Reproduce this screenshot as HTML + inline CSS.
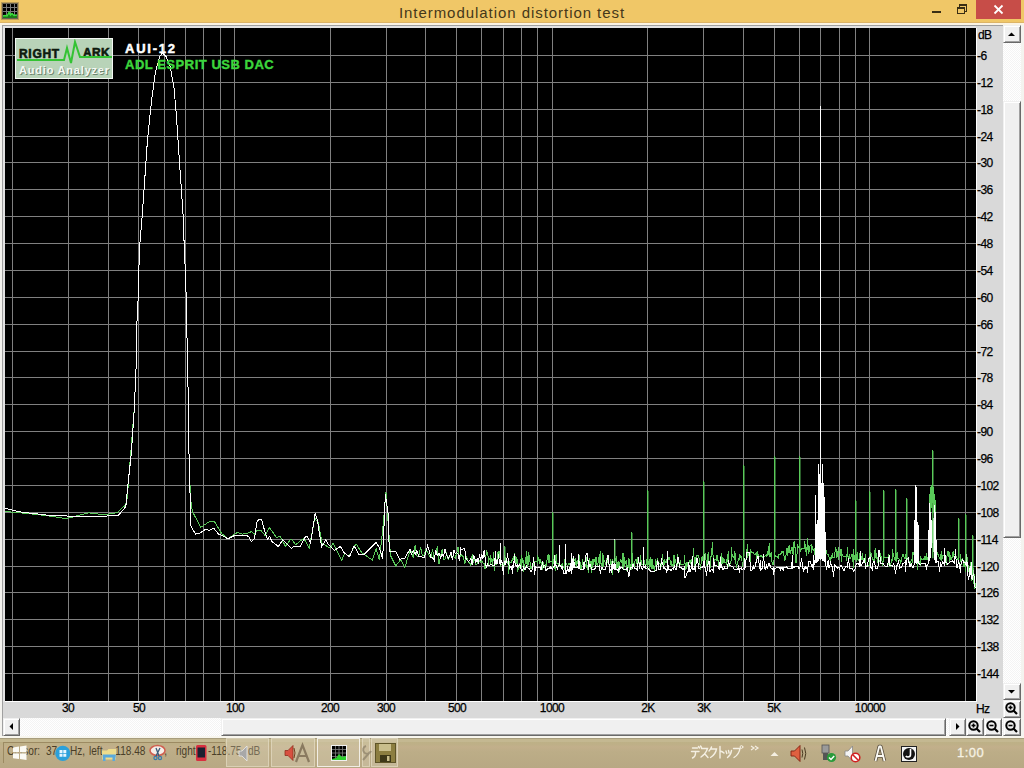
<!DOCTYPE html>
<html><head><meta charset="utf-8"><title>Intermodulation distortion test</title>
<style>
*{box-sizing:border-box}
html,body{margin:0;padding:0}
body{width:1024px;height:768px;overflow:hidden;position:relative;background:#FBF4E4;font-family:"Liberation Sans",sans-serif}
.a{position:absolute}
.lbl{position:absolute;font-size:12px;color:#000;line-height:12px;white-space:nowrap;letter-spacing:-0.6px;-webkit-text-stroke:0.25px #000}
.btn{position:absolute;background:#F0F0F0;border-top:1px solid #F0F0F0;border-left:1px solid #F0F0F0;border-right:1px solid #696969;border-bottom:1px solid #696969;box-shadow:inset 1px 1px 0 #fff, inset -1px -1px 0 #A0A0A0}
.track{position:absolute;background-color:#F4F4F4;background-image:linear-gradient(45deg,#fff 25%,transparent 25%,transparent 75%,#fff 75%),linear-gradient(45deg,#fff 25%,transparent 25%,transparent 75%,#fff 75%);background-size:2px 2px;background-position:0 0,1px 1px}
</style></head><body>

<div class="a" style="left:0;top:0;width:1024px;height:22px;background:#F0C767"></div>
<div class="a" style="left:0;top:22px;width:1024px;height:1px;background:#DDB466"></div>
<div class="a" style="left:2px;top:3px;width:16px;height:16px;background:#000;border:1px solid #6a6250;box-shadow:0 0 0 1px rgba(90,80,60,0.35)">
<svg width="14" height="14" style="position:absolute;left:0;top:0">
<g stroke="#7a7a7a" stroke-width="1">
<line x1="3.5" y1="0" x2="3.5" y2="14"/><line x1="7.5" y1="0" x2="7.5" y2="14"/><line x1="11.5" y1="0" x2="11.5" y2="14"/>
<line x1="0" y1="3.5" x2="14" y2="3.5"/><line x1="0" y1="7.5" x2="14" y2="7.5"/><line x1="0" y1="11.5" x2="14" y2="11.5"/>
</g>
<path d="M0 14V12L2 11.5L4 12L6 8.5L7.5 11L9 9.5L11 11.5L14 11V14Z" fill="#1a7a1a"/><polyline points="0,12 2,11.5 4,12 6,8.5 7.5,11 9,9.5 11,11.5 14,11" fill="none" stroke="#3ae03a" stroke-width="1.5"/>
</svg></div>
<div class="a" style="left:0;top:4px;width:1024px;text-align:center;font-size:15px;line-height:18px;color:#45381A;letter-spacing:0.95px;padding-left:0px">Intermodulation distortion test</div>
<div class="a" style="left:932px;top:11px;width:9px;height:2px;background:#3A2E14"></div>
<div class="a" style="left:959px;top:4px;width:8px;height:8px;border:1px solid #3A2E14;border-top-width:2px"></div>
<div class="a" style="left:957px;top:7px;width:8px;height:7px;border:1px solid #3A2E14;border-top-width:2px;background:#F0C767"></div>
<div class="a" style="left:976px;top:0;width:45px;height:19px;background:#C74D48"></div>
<svg class="a" style="left:976px;top:0" width="45" height="19"><g stroke="#fff" stroke-width="1.8"><line x1="18.5" y1="5.5" x2="26.5" y2="13.5"/><line x1="26.5" y1="5.5" x2="18.5" y2="13.5"/></g></svg>
<div class="a" style="left:2px;top:25px;width:1019px;height:713px;background:#D9D9D9;border-top:1px solid #A0A0A0;border-left:1px solid #A0A0A0"></div>
<div class="a" style="left:3px;top:26px;width:973px;height:2px;background:#E3E3E3"></div>
<div class="a" style="left:3px;top:26px;width:2px;height:676px;background:#E3E3E3"></div>
<div class="a" style="left:5px;top:28px;width:972px;height:674px;background:#000;border-right:1px solid #fff;border-bottom:1px solid #fff"></div>
<svg class="a" style="left:0;top:0" width="1024" height="768">
<path d="M12.5 28V701 M68.5 28V701 M108.5 28V701 M138.5 28V701 M164.5 28V701 M185.5 28V701 M203.5 28V701 M220.5 28V701 M234.5 28V701 M330.5 28V701 M386.5 28V701 M425.5 28V701 M456.5 28V701 M481.5 28V701 M503.5 28V701 M521.5 28V701 M537.5 28V701 M552.5 28V701 M647.5 28V701 M703.5 28V701 M743.5 28V701 M774.5 28V701 M799.5 28V701 M820.5 28V701 M839.5 28V701 M855.5 28V701 M869.5 28V701 M965.5 28V701 M5 55.5H976 M5 82.5H976 M5 109.5H976 M5 136.5H976 M5 162.5H976 M5 189.5H976 M5 216.5H976 M5 243.5H976 M5 270.5H976 M5 297.5H976 M5 324.5H976 M5 351.5H976 M5 377.5H976 M5 404.5H976 M5 431.5H976 M5 458.5H976 M5 485.5H976 M5 512.5H976 M5 539.5H976 M5 566.5H976 M5 592.5H976 M5 619.5H976 M5 646.5H976 M5 673.5H976" stroke="#808080" stroke-width="1" fill="none" shape-rendering="crispEdges"/>
</svg>
<svg class="a" style="left:0;top:0" width="1024" height="768"><clipPath id="pc"><rect x="5" y="28" width="971" height="673"/></clipPath><g clip-path="url(#pc)" fill="none" stroke-width="1" shape-rendering="crispEdges"><path d="M5.0 511.4L27.3 513.5L47.9 515.8L65.6 518.5L72.5 517.0L88.9 512.8L104.0 514.9L117.6 512.5L125.8 504.6L127.2 497.8L134.4 407.0L136.4 360.0L136.6 342.5L137.1 317.0L138.4 294.0L138.9 268.9L139.7 246.0L142.2 215.5L143.8 193.0L147.3 142.3L149.8 116.9L152.4 94.0L155.4 72.4L159.5 57.0L162.5 53.0L166.3 57.0L170.1 66.0L174.0 87.7L176.5 116.9L179.0 155.0L181.6 193.0L182.3 202.9L183.3 218.0L184.1 243.5L184.9 261.0L186.1 294.0L187.1 342.5L187.4 360.0L188.1 391.0L189.0 453.8L189.9 481.5L190.4 498.0L192.5 511.7L200.8 527.3L210.2 521.0L214.4 521.6L221.7 533.5L227.9 538.8L237.3 532.5L242.5 534.1L250.0 532.5L251.4 531.4L254.6 534.2L256.9 530.1L261.0 530.5L265.1 535.5L269.2 527.3L276.5 537.4L280.1 536.5L285.6 546.5L291.0 538.7L295.6 544.7L303.8 538.3L309.3 547.9L314.7 518.2L318.4 522.8L322.0 542.8L325.7 545.6L330.0 547.9L333.2 543.2L341.7 560.1L345.0 553.0L348.8 556.8L356.0 543.8L361.9 552.9L372.3 560.1L376.2 549.0L379.4 560.1L382.7 529.5L386.0 492.4L390.5 555.5L395.7 565.9L400.9 559.4L404.8 567.9L410.0 550.3L411.3 551.4L413.2 557.5L415.1 545.0L416.9 555.9L418.8 556.6L420.6 546.7L422.3 555.8L424.1 555.2L425.8 550.2L427.6 552.0L429.2 555.5L430.9 557.3L432.6 549.6L434.2 559.1L435.8 550.9L437.4 547.6L439.0 563.8L440.5 556.4L442.1 549.4L443.6 559.8L445.1 558.8L446.6 553.6L448.1 559.4L449.5 556.8L451.0 553.8L452.4 556.4L453.8 556.7L455.2 558.5L456.6 553.4L458.0 547.3L459.4 559.1L460.7 554.1L462.0 555.5L463.4 556.9L464.7 564.4L466.0 556.6L467.2 559.0L468.5 562.0L469.8 563.2L471.0 565.4L472.3 553.8L473.5 561.8L474.7 559.4L475.9 564.5L477.1 563.8L478.3 558.6L479.5 560.8L480.6 562.1L481.8 560.2L482.9 562.8L484.1 563.6L485.2 569.4L486.3 550.4L487.5 552.7L488.5 559.9L488.5 564.7L488.5 559.4L489.5 559.6L490.5 557.2L490.5 555.0L490.5 563.7L491.5 558.1L492.5 566.6L493.5 551.8L494.5 570.8L495.5 559.5L496.5 565.2L497.5 552.4L497.5 560.3L497.5 561.7L498.5 551.8L499.5 551.9L500.5 563.0L500.5 566.5L500.5 564.7L501.5 564.8L502.5 562.9L503.5 563.7L504.5 565.6L504.5 546.0L504.5 565.2L505.5 556.6L505.5 563.7L505.5 561.0L506.5 561.1L507.5 561.1L508.5 567.7L508.5 559.0L508.5 574.4L509.5 566.7L509.5 564.2L509.5 562.0L510.5 562.1L511.5 562.1L512.5 559.0L513.5 559.7L514.5 552.8L515.5 559.9L515.5 564.4L515.5 565.2L516.5 557.4L517.5 569.4L517.5 559.2L517.5 572.4L518.5 567.6L519.5 567.6L520.5 558.7L520.5 567.5L520.5 565.7L521.5 554.8L521.5 562.6L521.5 567.7L522.5 557.7L522.5 559.0L522.5 562.1L523.5 562.9L523.5 559.9L523.5 571.6L524.5 565.5L525.5 562.8L526.5 551.2L526.5 557.0L526.5 560.4L527.5 567.7L527.5 556.4L527.5 563.7L528.5 564.8L528.5 565.3L528.5 552.2L529.5 557.0L530.5 566.3L530.5 563.9L530.5 568.0L531.5 568.0L532.5 564.0L533.5 565.3L534.5 561.6L535.5 561.7L536.5 561.7L537.5 560.0L537.5 563.6L537.5 554.9L538.5 558.8L539.5 563.9L539.5 559.3L539.5 561.5L540.5 561.6L540.5 562.8L540.5 559.3L541.5 564.0L542.5 570.1L542.5 562.9L542.5 564.2L543.5 562.1L543.5 567.3L543.5 562.4L544.5 567.7L545.5 568.0L546.5 561.0L546.5 566.1L546.5 565.7L547.5 555.3L548.5 561.0L548.5 563.0L548.5 554.6L549.5 555.8L549.5 563.2L549.5 561.1L550.5 561.1L551.5 561.1L552.5 562.6L552.5 512.0L552.5 567.1L553.5 558.7L553.5 563.9L553.5 563.7L554.5 564.0L554.5 561.2L554.5 566.2L555.5 571.3L555.5 555.1L555.5 565.6L556.5 561.3L556.5 554.2L556.5 563.2L557.5 563.2L558.5 563.3L559.5 566.6L559.5 564.1L559.5 563.3L560.5 565.9L561.5 565.2L562.5 563.2L562.5 563.5L562.5 567.9L563.5 567.9L564.5 567.9L564.5 558.5L564.5 570.4L565.5 563.3L566.5 564.1L567.5 566.0L568.5 563.9L568.5 563.4L568.5 563.4L569.5 563.4L570.5 566.8L571.5 563.3L571.5 559.6L571.5 558.8L572.5 558.8L573.5 560.0L574.5 560.4L575.5 558.8L575.5 560.6L575.5 564.4L576.5 564.3L576.5 561.0L576.5 567.9L577.5 561.3L578.5 563.7L578.5 565.7L578.5 555.2L579.5 555.2L580.5 567.6L580.5 565.4L580.5 568.5L581.5 568.5L582.5 561.6L582.5 558.9L582.5 565.1L583.5 562.8L583.5 563.2L583.5 565.6L584.5 562.6L585.5 565.1L586.5 566.2L586.5 557.4L586.5 564.7L587.5 570.2L587.5 565.0L587.5 568.5L588.5 562.1L588.5 565.4L588.5 572.6L589.5 562.4L589.5 563.9L589.5 558.2L590.5 564.5L590.5 563.9L590.5 564.8L591.5 572.6L591.5 565.5L591.5 563.3L592.5 559.2L592.5 567.4L592.5 568.1L593.5 561.6L593.5 558.9L593.5 561.3L594.5 561.3L595.5 556.9L595.5 566.9L595.5 562.3L596.5 557.2L596.5 562.7L596.5 562.0L597.5 567.0L598.5 558.5L599.5 555.7L599.5 567.4L599.5 553.7L600.5 557.1L600.5 551.4L600.5 563.1L601.5 563.1L602.5 567.7L602.5 553.3L602.5 569.8L603.5 564.8L603.5 555.0L603.5 560.8L604.5 560.8L605.5 563.8L606.5 566.3L606.5 563.6L606.5 559.9L607.5 556.2L607.5 557.8L607.5 562.6L608.5 563.3L609.5 566.6L610.5 562.9L610.5 559.3L610.5 563.7L611.5 561.4L612.5 574.5L612.5 558.9L612.5 562.5L613.5 562.4L614.5 560.5L614.5 539.0L614.5 560.5L615.5 560.5L616.5 555.7L616.5 559.8L616.5 570.1L617.5 565.1L617.5 566.8L617.5 563.7L618.5 561.0L618.5 562.4L618.5 567.5L619.5 572.4L619.5 564.7L619.5 562.8L620.5 560.5L621.5 562.3L621.5 562.6L621.5 561.0L622.5 561.8L622.5 552.5L622.5 567.6L623.5 569.9L623.5 559.4L623.5 553.4L624.5 560.8L624.5 566.0L624.5 561.5L625.5 563.7L625.5 563.7L625.5 562.1L626.5 560.8L626.5 561.6L626.5 571.2L627.5 568.4L627.5 565.3L627.5 565.4L628.5 567.8L628.5 560.6L628.5 558.3L629.5 572.6L629.5 558.8L629.5 566.8L630.5 566.8L631.5 561.4L631.5 532.0L631.5 570.2L632.5 567.3L632.5 553.1L632.5 565.5L633.5 563.2L633.5 564.4L633.5 564.2L634.5 564.6L634.5 567.3L634.5 562.4L635.5 559.9L636.5 559.9L637.5 567.3L637.5 557.2L637.5 563.6L638.5 563.6L639.5 561.7L639.5 565.5L639.5 564.6L640.5 563.0L640.5 561.3L640.5 555.2L641.5 564.1L642.5 564.1L643.5 564.1L644.5 560.4L644.5 563.6L644.5 564.6L645.5 564.6L646.5 564.4L646.5 559.0L646.5 561.9L647.5 566.5L647.5 490.0L647.5 568.7L648.5 560.8L649.5 568.7L649.5 558.6L649.5 565.0L650.5 567.0L650.5 566.3L650.5 557.0L651.5 568.6L651.5 559.3L651.5 559.6L652.5 559.7L652.5 568.8L652.5 562.7L653.5 567.4L654.5 569.5L655.5 563.0L655.5 558.7L655.5 564.2L656.5 564.9L656.5 567.8L656.5 564.2L657.5 558.7L657.5 562.1L657.5 558.5L658.5 563.7L658.5 565.2L658.5 563.9L659.5 563.8L660.5 563.8L661.5 567.3L661.5 563.0L661.5 561.6L662.5 553.8L663.5 567.0L663.5 566.1L663.5 561.5L664.5 558.9L664.5 561.1L664.5 563.7L665.5 561.9L666.5 560.7L666.5 563.1L666.5 560.4L667.5 557.4L667.5 565.4L667.5 562.5L668.5 557.1L669.5 557.1L670.5 562.9L670.5 564.0L670.5 564.6L671.5 560.7L671.5 565.6L671.5 565.6L672.5 564.9L673.5 567.1L673.5 555.0L673.5 569.6L674.5 555.1L674.5 564.8L674.5 559.4L675.5 559.4L676.5 567.1L677.5 564.1L677.5 554.4L677.5 556.4L678.5 563.1L679.5 564.3L680.5 560.5L680.5 561.6L680.5 564.8L681.5 564.8L682.5 564.7L683.5 564.7L684.5 562.6L684.5 561.7L684.5 555.5L685.5 569.6L686.5 568.4L686.5 563.0L686.5 563.5L687.5 561.8L687.5 561.6L687.5 565.8L688.5 565.7L689.5 560.5L690.5 563.8L690.5 560.4L690.5 560.1L691.5 560.0L692.5 564.4L693.5 548.1L694.5 566.2L694.5 567.7L694.5 568.6L695.5 564.2L695.5 557.2L695.5 562.6L696.5 562.3L696.5 563.6L696.5 555.9L697.5 555.9L698.5 555.8L699.5 559.5L700.5 569.8L701.5 558.9L702.5 556.2L702.5 561.3L702.5 558.8L703.5 563.5L703.5 481.0L703.5 566.6L704.5 555.9L704.5 558.3L704.5 564.7L705.5 553.4L706.5 565.8L707.5 566.6L707.5 554.1L707.5 564.3L708.5 551.9L708.5 562.1L708.5 564.9L709.5 562.9L709.5 561.4L709.5 564.8L710.5 566.6L710.5 560.3L710.5 558.8L711.5 554.3L712.5 542.3L713.5 566.3L713.5 563.7L713.5 561.6L714.5 566.7L714.5 562.9L714.5 559.7L715.5 559.6L716.5 560.0L716.5 556.0L716.5 555.7L717.5 555.6L718.5 565.5L718.5 561.9L718.5 560.2L719.5 568.4L720.5 555.9L721.5 562.5L721.5 566.8L721.5 552.7L722.5 561.7L722.5 563.9L722.5 559.6L723.5 558.8L723.5 562.7L723.5 559.9L724.5 559.8L724.5 559.0L724.5 562.2L725.5 562.1L726.5 563.8L727.5 554.1L727.5 558.3L727.5 561.6L728.5 560.9L728.5 550.5L728.5 566.6L729.5 563.9L730.5 563.8L731.5 557.5L731.5 547.4L731.5 552.2L732.5 556.3L733.5 556.2L734.5 559.6L734.5 553.4L734.5 550.6L735.5 556.1L735.5 557.1L735.5 561.0L736.5 567.7L737.5 563.0L738.5 559.4L738.5 557.9L738.5 558.3L739.5 560.3L739.5 556.9L739.5 554.5L740.5 556.4L740.5 555.6L740.5 558.4L741.5 556.1L742.5 566.6L743.5 557.3L743.5 465.0L743.5 554.4L744.5 561.6L745.5 561.3L746.5 557.6L746.5 549.3L746.5 555.6L747.5 556.8L747.5 543.5L747.5 557.6L748.5 554.1L749.5 556.8L749.5 558.1L749.5 555.8L750.5 564.1L750.5 566.5L750.5 549.4L751.5 552.5L752.5 552.4L753.5 552.2L754.5 554.9L755.5 554.8L756.5 552.0L756.5 555.0L756.5 561.6L757.5 551.5L758.5 555.9L759.5 556.8L760.5 555.9L761.5 555.8L762.5 557.1L763.5 557.0L764.5 556.8L765.5 555.7L766.5 556.3L767.5 551.3L767.5 553.6L767.5 555.6L768.5 553.0L768.5 555.4L768.5 548.7L769.5 543.2L769.5 551.9L769.5 556.6L770.5 555.7L770.5 556.8L770.5 553.1L771.5 556.4L771.5 552.2L771.5 558.5L772.5 565.0L773.5 564.8L774.5 554.4L774.5 456.0L774.5 554.4L775.5 556.6L776.5 556.5L777.5 557.0L778.5 558.2L778.5 558.9L778.5 554.2L779.5 554.7L780.5 554.5L781.5 551.6L781.5 553.6L781.5 551.2L782.5 552.1L783.5 552.0L784.5 560.1L785.5 560.0L786.5 550.2L786.5 553.4L786.5 547.6L787.5 552.1L787.5 556.0L787.5 549.0L788.5 546.6L788.5 552.8L788.5 553.0L789.5 548.0L789.5 545.4L789.5 551.8L790.5 553.1L790.5 551.8L790.5 552.1L791.5 548.9L791.5 547.3L791.5 547.1L792.5 554.1L792.5 548.8L792.5 553.3L793.5 541.9L793.5 553.1L793.5 555.1L794.5 541.0L795.5 552.0L795.5 551.2L795.5 562.6L796.5 562.5L797.5 545.4L798.5 547.3L799.5 547.2L799.5 456.0L799.5 547.2L800.5 550.7L801.5 549.0L802.5 548.9L803.5 548.8L804.5 548.4L804.5 546.3L804.5 541.0L805.5 547.7L806.5 555.7L807.5 538.2L807.5 550.0L807.5 544.4L808.5 546.2L808.5 548.4L808.5 552.8L809.5 551.5L809.5 549.9L809.5 546.3L810.5 545.4L811.5 544.5L811.5 552.7L811.5 550.4L812.5 546.4L812.5 547.6L812.5 549.6L813.5 549.9L814.5 550.7L814.5 554.5L814.5 553.9L815.5 541.4L815.5 553.0L815.5 552.6L816.5 548.8L817.5 551.7L818.5 550.0L818.5 544.7L818.5 549.3L819.5 553.3L820.5 552.7L821.5 551.0L822.5 546.4L823.5 546.8L824.5 546.1L825.5 561.7L825.5 554.4L825.5 551.8L826.5 549.7L826.5 551.8L826.5 553.6L827.5 554.7L828.5 555.0L829.5 559.2L830.5 558.2L830.5 558.8L830.5 562.2L831.5 555.4L832.5 555.6L832.5 552.5L832.5 557.7L833.5 557.8L834.5 557.9L835.5 547.0L836.5 551.3L836.5 551.8L836.5 557.8L837.5 555.3L838.5 546.7L838.5 560.2L838.5 552.2L839.5 552.3L840.5 549.4L841.5 561.8L841.5 549.3L841.5 551.5L842.5 556.0L843.5 556.1L844.5 556.2L845.5 556.2L846.5 556.7L846.5 561.1L846.5 555.0L847.5 552.8L847.5 546.6L847.5 556.2L848.5 557.5L849.5 553.8L849.5 554.3L849.5 558.1L850.5 558.2L851.5 555.9L851.5 554.1L851.5 556.0L852.5 554.0L852.5 558.9L852.5 555.2L853.5 567.8L853.5 552.9L853.5 549.1L854.5 560.2L854.5 556.4L854.5 557.0L855.5 559.5L855.5 500.0L855.5 551.4L856.5 559.9L856.5 561.8L856.5 554.2L857.5 559.6L857.5 551.8L857.5 559.5L858.5 559.6L859.5 561.6L859.5 557.8L859.5 553.3L860.5 556.4L861.5 559.0L862.5 552.7L862.5 555.5L862.5 559.0L863.5 558.7L863.5 559.8L863.5 561.3L864.5 561.4L865.5 554.2L865.5 558.2L865.5 565.5L866.5 565.6L867.5 565.6L868.5 565.7L869.5 565.8L869.5 491.0L869.5 565.8L870.5 552.5L870.5 563.7L870.5 553.4L871.5 553.4L872.5 559.9L873.5 559.9L874.5 560.6L874.5 558.9L874.5 550.5L875.5 549.1L875.5 557.6L875.5 554.3L876.5 553.8L877.5 563.2L877.5 562.5L877.5 557.0L878.5 562.0L879.5 561.0L880.5 561.5L880.5 553.2L880.5 562.6L881.5 558.9L881.5 557.9L881.5 555.9L882.5 565.8L883.5 558.7L883.5 490.0L883.5 557.9L884.5 557.9L885.5 557.2L886.5 557.3L887.5 557.3L888.5 559.3L888.5 554.1L888.5 562.6L889.5 566.3L890.5 566.3L891.5 560.4L891.5 560.7L891.5 559.1L892.5 561.0L892.5 548.7L892.5 553.6L893.5 553.6L894.5 560.3L894.5 558.1L894.5 559.8L895.5 559.7L895.5 489.0L895.5 559.7L896.5 562.0L896.5 553.3L896.5 560.9L897.5 557.3L897.5 552.0L897.5 558.9L898.5 559.0L899.5 559.1L900.5 561.8L900.5 561.0L900.5 563.8L901.5 560.5L902.5 554.4L903.5 554.5L904.5 558.7L905.5 558.9L905.5 554.3L905.5 558.6L906.5 558.6L906.5 498.0L906.5 558.6L907.5 559.1L908.5 560.2L908.5 561.9L908.5 557.8L909.5 563.4L910.5 563.5L911.5 558.8L912.5 562.6L912.5 558.5L912.5 552.6L913.5 552.7L914.5 557.5L915.5 560.1L916.5 562.6L916.5 554.7L916.5 553.5L917.5 562.7L917.5 569.7L917.5 563.1L918.5 563.1L919.5 563.4L919.5 560.6L919.5 563.9L920.5 559.9L920.5 566.2L920.5 557.1L921.5 558.3L921.5 560.4L921.5 559.6L922.5 559.5L923.5 559.5L924.5 556.0L924.5 558.8L924.5 559.9L925.5 559.9L926.5 553.3L926.5 560.0L926.5 553.1L927.5 559.8L928.5 559.7L929.5 520.0L929.5 494.0L929.5 520.0L930.5 510.0L930.5 487.0L930.5 510.0L931.5 505.0L931.5 485.0L931.5 505.0L932.5 500.0L932.5 450.0L932.5 500.0L933.5 505.0L933.5 487.0L933.5 505.0L934.5 520.0L934.5 494.0L934.5 520.0L935.5 540.0L935.5 500.0L935.5 540.0L936.5 549.3L937.5 555.0L938.5 554.9L939.5 559.1L940.5 554.8L940.5 554.4L940.5 559.8L941.5 555.5L941.5 560.7L941.5 550.8L942.5 558.9L942.5 559.4L942.5 555.4L943.5 555.4L944.5 554.3L944.5 560.7L944.5 557.2L945.5 559.6L946.5 556.1L946.5 565.3L946.5 561.7L947.5 551.3L948.5 551.2L949.5 562.5L949.5 557.1L949.5 552.3L950.5 557.2L950.5 559.9L950.5 559.9L951.5 559.8L952.5 554.2L952.5 558.0L952.5 554.1L953.5 550.8L953.5 556.9L953.5 554.3L954.5 554.2L955.5 556.5L956.5 556.6L957.5 559.3L958.5 557.4L958.5 518.0L958.5 560.6L959.5 565.1L960.5 558.7L960.5 553.8L960.5 560.3L961.5 559.6L961.5 565.3L961.5 560.6L962.5 559.1L963.5 562.4L963.5 563.9L963.5 567.3L964.5 561.0L964.5 562.0L964.5 561.7L965.5 571.5L965.5 514.0L965.5 571.5L966.5 556.6L967.5 558.4L968.5 571.0L969.5 569.0L969.5 571.6L969.5 569.5L970.5 564.0L970.5 573.5L970.5 561.8L971.5 570.0L971.5 572.8L971.5 580.6L972.5 577.3L972.5 535.0L972.5 577.3L973.5 568.2L973.5 584.2L973.5 573.4L974.5 575.5L974.5 588.6L974.5 576.8L975.5 588.2" stroke="#5ACA5A"/><path d="M5.0 508.3L20.5 512.0L50.6 515.5L72.5 516.2L104.0 516.2L118.3 515.3L125.8 506.7L127.8 485.5L131.3 453.8L134.4 407.0L136.4 360.0L136.6 342.5L137.1 317.0L138.4 294.0L138.9 268.9L139.7 246.0L142.2 215.5L143.8 193.0L147.3 142.3L149.8 116.9L152.4 94.0L155.4 72.4L159.5 57.0L162.5 53.0L166.3 57.0L170.1 66.0L174.0 87.7L176.5 116.9L179.0 155.0L181.6 193.0L182.3 202.9L183.3 218.0L184.1 243.5L184.9 261.0L186.1 294.0L187.1 342.5L187.4 360.0L188.1 391.0L189.0 453.8L189.4 470.0L190.2 499.2L190.4 525.2L195.6 534.1L199.8 533.0L205.5 529.4L209.2 530.4L213.9 528.3L218.5 534.1L222.7 535.6L227.9 538.8L235.2 535.1L242.5 535.6L245.5 535.1L248.7 536.5L251.4 541.5L254.6 538.3L256.9 521.9L258.7 519.6L261.4 519.1L264.2 529.2L267.3 539.2L269.6 536.5L271.9 541.5L278.3 546.5L282.8 539.7L287.4 544.7L291.5 548.3L294.7 546.0L300.2 546.5L305.6 536.5L307.5 536.9L310.6 542.8L315.2 512.8L317.5 521.0L321.6 547.0L325.7 540.1L328.0 543.8L334.5 550.3L340.4 546.4L344.3 552.9L349.5 556.8L354.0 545.8L359.3 554.9L363.8 554.9L368.4 550.3L376.2 542.5L379.4 547.7L382.7 559.4L385.3 494.3L388.5 516.5L389.2 551.6L395.7 551.0L399.6 559.4L404.8 558.1L410.0 549.0L411.3 554.0L413.2 550.8L415.1 554.3L416.9 550.6L418.8 556.8L420.6 556.1L422.3 557.4L424.1 557.4L425.8 552.2L427.6 545.7L429.2 550.4L430.9 557.9L432.6 558.0L434.2 560.5L435.8 550.5L437.4 555.7L439.0 553.2L440.5 557.7L442.1 554.2L443.6 556.3L445.1 548.7L446.6 555.2L448.1 558.4L449.5 556.3L451.0 552.2L452.4 560.3L453.8 549.8L455.2 553.4L456.6 552.7L458.0 554.1L459.4 561.0L460.7 548.5L462.0 550.3L463.4 548.3L464.7 548.1L466.0 558.5L467.2 560.4L468.5 561.5L469.8 560.5L471.0 558.6L472.3 565.3L473.5 555.7L474.7 557.6L475.9 562.8L477.1 558.3L478.3 563.5L479.5 553.8L480.6 560.5L481.8 553.7L482.9 558.7L484.1 550.0L485.2 559.0L486.3 567.8L487.5 563.4L487.5 565.5L488.5 565.6L489.5 565.8L490.5 564.7L490.5 564.5L491.5 564.7L492.5 565.1L493.5 565.3L494.5 565.4L495.5 551.0L495.5 563.5L496.5 559.7L496.5 563.8L497.5 563.9L498.5 553.8L499.5 563.5L500.5 560.6L500.5 543.0L500.5 565.1L501.5 561.4L502.5 563.2L502.5 566.3L503.5 574.8L504.5 554.9L505.5 564.0L506.5 562.4L507.5 553.3L508.5 561.8L509.5 568.0L510.5 566.8L511.5 566.8L512.5 573.5L512.5 565.1L513.5 567.9L514.5 554.1L514.5 560.4L515.5 565.4L516.5 565.4L517.5 568.4L517.5 564.1L518.5 566.4L519.5 564.5L520.5 566.1L521.5 570.9L522.5 570.9L523.5 567.4L524.5 569.0L525.5 569.7L526.5 564.8L526.5 567.7L527.5 567.7L528.5 568.5L529.5 568.5L530.5 571.0L531.5 571.0L532.5 568.3L532.5 568.4L533.5 557.4L534.5 566.3L534.5 575.4L535.5 566.4L535.5 567.0L536.5 567.0L537.5 567.1L538.5 567.1L539.5 567.1L540.5 568.2L540.5 569.9L541.5 570.0L542.5 561.0L543.5 568.2L543.5 565.7L544.5 565.6L545.5 566.9L545.5 570.1L546.5 570.2L547.5 568.8L548.5 568.9L549.5 568.9L550.5 566.3L550.5 568.1L551.5 567.6L551.5 567.8L552.5 569.8L552.5 568.5L553.5 567.8L554.5 565.2L554.5 555.5L555.5 565.3L556.5 565.3L557.5 569.6L558.5 565.1L559.5 565.2L559.5 545.0L559.5 565.2L560.5 565.2L561.5 569.2L561.5 566.0L562.5 566.0L563.5 573.0L564.5 573.0L565.5 573.0L565.5 544.0L565.5 573.0L566.5 573.0L567.5 568.0L567.5 566.3L568.5 571.2L569.5 571.2L570.5 563.5L570.5 568.0L571.5 574.3L571.5 553.3L572.5 564.9L572.5 568.9L573.5 567.2L573.5 556.0L574.5 567.7L575.5 567.7L576.5 567.7L577.5 566.9L578.5 568.2L578.5 554.5L579.5 567.7L580.5 569.8L581.5 569.8L582.5 569.8L583.5 569.4L583.5 562.4L584.5 569.1L585.5 555.8L586.5 553.7L587.5 553.7L588.5 567.0L588.5 569.6L589.5 564.5L590.5 564.5L591.5 569.0L592.5 569.0L593.5 569.0L594.5 569.0L595.5 567.9L595.5 564.8L596.5 566.7L597.5 566.7L598.5 566.7L599.5 565.7L599.5 568.2L600.5 573.9L601.5 567.3L602.5 567.3L603.5 569.9L604.5 569.9L605.5 569.9L606.5 565.2L607.5 555.2L608.5 555.2L609.5 572.7L610.5 568.9L611.5 572.9L611.5 564.0L612.5 569.5L612.5 561.3L613.5 566.9L614.5 570.0L614.5 539.0L614.5 557.6L615.5 569.7L616.5 569.7L617.5 569.7L618.5 573.0L618.5 568.9L619.5 569.6L619.5 566.3L620.5 568.3L621.5 567.9L622.5 567.9L623.5 569.5L624.5 569.5L625.5 569.5L626.5 569.5L627.5 566.7L628.5 577.1L629.5 574.0L630.5 567.1L631.5 567.1L632.5 568.5L632.5 564.7L633.5 564.7L634.5 568.5L634.5 568.7L635.5 568.7L636.5 568.7L637.5 570.3L638.5 556.8L639.5 568.9L640.5 562.4L641.5 569.0L641.5 568.8L642.5 569.3L642.5 569.0L643.5 567.2L643.5 547.0L643.5 567.2L644.5 567.2L645.5 566.0L645.5 568.5L646.5 568.5L647.5 567.4L648.5 569.0L649.5 569.0L650.5 571.9L651.5 571.9L652.5 571.9L653.5 571.9L654.5 571.9L655.5 570.3L656.5 570.3L657.5 560.0L658.5 563.9L658.5 569.4L659.5 569.4L660.5 569.4L661.5 558.2L662.5 564.7L662.5 562.7L663.5 567.9L664.5 567.2L664.5 568.1L665.5 568.1L666.5 572.6L666.5 568.9L667.5 571.0L667.5 551.0L667.5 560.6L668.5 569.7L669.5 569.7L670.5 570.0L671.5 570.0L672.5 568.2L673.5 568.9L674.5 565.9L674.5 565.3L675.5 569.8L676.5 569.8L677.5 557.9L678.5 557.9L679.5 567.8L680.5 567.8L681.5 567.8L682.5 569.2L683.5 569.2L684.5 566.1L684.5 577.0L685.5 577.0L686.5 575.5L687.5 571.2L688.5 571.6L688.5 561.8L689.5 567.8L689.5 571.0L690.5 571.0L691.5 567.9L692.5 556.3L692.5 569.2L693.5 569.2L694.5 566.4L694.5 568.5L695.5 571.5L695.5 568.9L696.5 558.9L697.5 558.9L698.5 567.1L698.5 568.9L699.5 569.0L700.5 567.6L701.5 567.6L702.5 567.6L703.5 565.6L703.5 561.2L704.5 553.8L704.5 567.5L705.5 567.5L706.5 575.8L707.5 567.1L708.5 561.9L709.5 562.0L709.5 571.2L710.5 571.2L711.5 569.1L712.5 569.1L713.5 572.5L713.5 558.0L714.5 565.5L715.5 565.5L716.5 565.5L717.5 566.9L718.5 567.0L718.5 568.2L719.5 569.0L719.5 568.6L720.5 556.8L720.5 567.7L721.5 565.4L722.5 569.4L723.5 569.4L724.5 566.3L724.5 568.2L725.5 568.2L726.5 568.2L727.5 568.2L728.5 559.9L729.5 565.9L730.5 565.9L731.5 566.2L732.5 566.2L733.5 568.4L734.5 569.3L734.5 569.1L735.5 569.1L736.5 569.1L737.5 569.1L738.5 566.6L739.5 572.8L739.5 568.8L740.5 568.8L741.5 566.9L741.5 569.8L742.5 569.8L743.5 568.6L744.5 569.2L744.5 557.8L745.5 568.1L745.5 568.0L746.5 552.7L747.5 552.7L748.5 552.7L749.5 552.7L750.5 570.8L751.5 570.8L752.5 568.6L753.5 565.5L753.5 568.4L754.5 567.4L754.5 568.5L755.5 565.5L755.5 562.6L756.5 562.6L757.5 556.1L758.5 556.1L759.5 569.2L760.5 560.2L760.5 570.2L761.5 568.8L762.5 568.2L763.5 554.5L764.5 567.3L765.5 569.9L765.5 568.9L766.5 565.5L767.5 569.4L768.5 563.5L769.5 563.4L770.5 567.5L771.5 568.2L772.5 569.4L773.5 567.9L773.5 574.5L774.5 568.8L775.5 568.7L776.5 567.0L777.5 567.0L778.5 567.0L779.5 568.0L780.5 569.8L780.5 567.8L781.5 567.8L782.5 569.0L782.5 566.7L783.5 571.0L783.5 568.2L784.5 567.2L785.5 567.2L786.5 566.7L787.5 568.4L788.5 568.4L789.5 568.4L790.5 568.4L791.5 568.4L792.5 555.0L792.5 568.4L793.5 567.0L794.5 567.3L794.5 566.0L795.5 566.0L796.5 566.0L797.5 566.0L798.5 567.0L798.5 568.2L799.5 568.2L800.5 565.5L801.5 558.4L802.5 565.8L802.5 566.2L803.5 570.7L804.5 568.5L805.5 566.2L805.5 568.6L806.5 567.6L807.5 570.0L807.5 572.7L808.5 562.0L809.5 561.9L810.5 561.9L811.5 566.0L812.5 565.1L813.5 570.0L813.5 555.2L814.5 565.4L815.5 560.0L815.5 495.0L815.5 560.0L816.5 562.0L816.5 524.0L816.5 562.0L817.5 561.0L817.5 520.0L817.5 561.0L818.5 560.0L818.5 464.0L818.5 560.0L819.5 558.0L819.5 474.0L819.5 558.0L820.5 560.0L820.5 106.0L820.5 560.0L821.5 558.0L821.5 483.0L821.5 558.0L822.5 560.0L822.5 464.0L822.5 560.0L823.5 560.0L823.5 483.0L823.5 560.0L824.5 561.0L824.5 497.0L824.5 561.0L825.5 562.0L825.5 532.0L825.5 562.0L826.5 570.4L827.5 563.4L828.5 559.7L828.5 567.7L829.5 567.7L830.5 561.5L831.5 566.9L832.5 566.4L833.5 576.7L834.5 565.0L835.5 566.0L836.5 566.4L837.5 568.7L837.5 567.3L838.5 567.2L839.5 568.8L840.5 565.5L841.5 565.4L842.5 568.1L843.5 570.0L844.5 570.0L845.5 566.3L846.5 566.3L847.5 567.2L848.5 557.9L849.5 568.1L850.5 568.1L851.5 568.1L852.5 569.0L853.5 570.7L853.5 570.5L854.5 570.5L855.5 566.7L856.5 563.2L857.5 563.2L858.5 563.2L859.5 567.3L860.5 551.1L860.5 565.7L861.5 565.9L862.5 562.1L863.5 562.1L864.5 558.6L865.5 567.8L866.5 566.0L867.5 566.0L868.5 558.8L868.5 558.1L869.5 558.1L870.5 554.2L870.5 567.4L871.5 567.3L872.5 570.7L872.5 565.2L873.5 561.2L874.5 561.2L875.5 568.7L876.5 568.7L877.5 568.7L878.5 562.7L878.5 550.2L879.5 550.2L880.5 563.5L881.5 563.5L882.5 563.5L883.5 563.5L884.5 565.9L885.5 566.2L885.5 566.6L886.5 566.6L887.5 566.6L888.5 560.3L889.5 554.6L889.5 565.8L890.5 565.8L891.5 565.7L892.5 566.0L893.5 564.2L894.5 566.0L895.5 573.9L896.5 566.0L897.5 565.9L898.5 560.2L899.5 568.1L900.5 567.9L901.5 567.9L902.5 563.7L903.5 563.7L904.5 562.6L904.5 562.5L905.5 561.0L905.5 571.8L906.5 558.0L906.5 558.6L907.5 558.5L908.5 557.9L909.5 567.4L909.5 561.7L910.5 565.7L911.5 563.8L912.5 567.4L913.5 567.3L914.5 563.0L914.5 520.0L914.5 563.0L915.5 562.0L915.5 485.0L915.5 562.0L916.5 563.0L916.5 487.0L916.5 563.0L917.5 562.0L917.5 522.0L917.5 562.0L918.5 563.0L918.5 525.0L918.5 563.0L919.5 563.0L919.5 564.7L920.5 564.6L921.5 563.4L922.5 563.4L923.5 563.3L924.5 563.2L925.5 563.2L926.5 570.3L926.5 565.9L927.5 565.8L928.5 562.0L928.5 530.0L928.5 562.0L929.5 560.0L929.5 503.0L929.5 560.0L930.5 556.0L930.5 512.0L930.5 556.0L931.5 540.0L931.5 520.0L931.5 540.0L932.5 540.0L932.5 521.0L932.5 540.0L933.5 545.0L933.5 518.0L933.5 545.0L934.5 558.0L934.5 505.0L934.5 558.0L935.5 562.0L935.5 512.0L935.5 562.0L936.5 562.0L936.5 540.0L936.5 562.0L937.5 561.3L938.5 561.6L939.5 572.0L940.5 563.3L941.5 565.5L942.5 561.9L943.5 562.2L944.5 566.4L944.5 548.0L945.5 562.4L946.5 562.4L947.5 564.0L948.5 563.4L949.5 562.6L950.5 561.6L951.5 561.5L952.5 561.0L953.5 562.2L954.5 563.5L955.5 549.2L956.5 567.2L957.5 567.4L958.5 560.1L959.5 565.6L960.5 573.2L960.5 565.8L961.5 562.8L962.5 559.9L963.5 560.9L963.5 562.0L964.5 562.3L965.5 562.5L966.5 566.3L966.5 554.4L967.5 569.6L967.5 572.0L968.5 579.8L969.5 574.3L969.5 569.6L970.5 566.4L970.5 575.0L971.5 562.0L971.5 577.1L972.5 580.3L973.5 569.8L974.5 581.2L974.5 585.2L975.5 588.4" stroke="#FFFFFF"/></g><path d="M504.8 547.0V560.9M552.8 513.0V562.7M614.8 540.0V563.0M631.8 533.0V563.0M647.8 491.0V563.0M703.8 482.0V560.7M743.8 466.0V556.6M774.8 457.0V552.2M799.8 457.0V549.2M855.8 501.0V555.9M869.8 492.0V556.9M883.8 491.0V557.5M895.8 490.0V558.0M906.8 499.0V558.4M932.8 451.0V558.3M958.8 519.0V558.1M965.8 515.0V560.6M972.8 536.0V573.2" stroke="#5ACA5A" stroke-width="1.5" opacity="0.85" fill="none"/></svg>
<div class="a" style="left:15px;top:38px;width:98px;height:41px;background:#B8D3B8;border:1px solid #F4F8F4;overflow:hidden">
<div class="a" style="left:3px;top:9px;font-size:12px;font-weight:bold;color:#0d1a0d;line-height:12px;letter-spacing:0.7px;-webkit-text-stroke:0.6px #0d1a0d">RIGHT</div>
<div class="a" style="left:67px;top:8px;font-size:12px;font-weight:bold;color:#0d1a0d;line-height:12px;letter-spacing:0.3px;-webkit-text-stroke:0.6px #0d1a0d">ARK</div>
<svg class="a" style="left:0;top:0" width="98" height="41"><polyline points="1,21 48,21 51,9 55,24 59,3 64,18 96,18" fill="none" stroke="#33C333" stroke-width="2"/></svg>
<div class="a" style="left:3px;top:25px;font-size:11px;font-weight:bold;color:#F4F8F4;line-height:12px;letter-spacing:0.8px;text-shadow:1px 1px 0 #6f866f">Audio Analyzer</div>
</div>
<div class="a" style="left:125px;top:42px;font-size:13px;font-weight:bold;color:#fff;line-height:13px;letter-spacing:1.75px;-webkit-text-stroke:0.5px #fff">AUI-12</div>
<div class="a" style="left:125px;top:58px;font-size:13px;font-weight:bold;color:#3CD63C;line-height:13px;letter-spacing:0.52px;-webkit-text-stroke:0.4px #3CD63C">ADL ESPRIT USB DAC</div>
<div class="lbl" style="left:978px;top:29px">dB</div>
<div class="lbl" style="left:977px;top:50px">-6</div>
<div class="lbl" style="left:977px;top:77px">-12</div>
<div class="lbl" style="left:977px;top:104px">-18</div>
<div class="lbl" style="left:977px;top:131px">-24</div>
<div class="lbl" style="left:977px;top:157px">-30</div>
<div class="lbl" style="left:977px;top:184px">-36</div>
<div class="lbl" style="left:977px;top:211px">-42</div>
<div class="lbl" style="left:977px;top:238px">-48</div>
<div class="lbl" style="left:977px;top:265px">-54</div>
<div class="lbl" style="left:977px;top:292px">-60</div>
<div class="lbl" style="left:977px;top:319px">-66</div>
<div class="lbl" style="left:977px;top:346px">-72</div>
<div class="lbl" style="left:977px;top:372px">-78</div>
<div class="lbl" style="left:977px;top:399px">-84</div>
<div class="lbl" style="left:977px;top:426px">-90</div>
<div class="lbl" style="left:977px;top:453px">-96</div>
<div class="lbl" style="left:977px;top:480px">-102</div>
<div class="lbl" style="left:977px;top:507px">-108</div>
<div class="lbl" style="left:977px;top:534px">-114</div>
<div class="lbl" style="left:977px;top:561px">-120</div>
<div class="lbl" style="left:977px;top:587px">-126</div>
<div class="lbl" style="left:977px;top:614px">-132</div>
<div class="lbl" style="left:977px;top:641px">-138</div>
<div class="lbl" style="left:977px;top:668px">-144</div>
<div class="lbl" style="left:38px;top:702px;width:60px;text-align:center">30</div>
<div class="lbl" style="left:109px;top:702px;width:60px;text-align:center">50</div>
<div class="lbl" style="left:205px;top:702px;width:60px;text-align:center">100</div>
<div class="lbl" style="left:300px;top:702px;width:60px;text-align:center">200</div>
<div class="lbl" style="left:356px;top:702px;width:60px;text-align:center">300</div>
<div class="lbl" style="left:427px;top:702px;width:60px;text-align:center">500</div>
<div class="lbl" style="left:522px;top:702px;width:60px;text-align:center">1000</div>
<div class="lbl" style="left:618px;top:702px;width:60px;text-align:center">2K</div>
<div class="lbl" style="left:674px;top:702px;width:60px;text-align:center">3K</div>
<div class="lbl" style="left:744px;top:702px;width:60px;text-align:center">5K</div>
<div class="lbl" style="left:840px;top:702px;width:60px;text-align:center">10000</div>
<div class="lbl" style="left:976px;top:703px">Hz</div>
<div class="track" style="left:1003px;top:43px;width:18px;height:641px"></div>
<div class="btn" style="left:1003px;top:25px;width:18px;height:18px"></div>
<svg class="a" style="left:1003px;top:25px" width="18" height="18"><path d="M5 11H12L8.5 7.5Z" fill="#000"/></svg>
<div class="btn" style="left:1003px;top:101px;width:18px;height:437px"></div>
<div class="btn" style="left:1003px;top:683px;width:18px;height:17px"></div>
<svg class="a" style="left:1003px;top:683px" width="18" height="17"><path d="M5 7H12L8.5 10.5Z" fill="#000"/></svg>
<div class="track" style="left:20px;top:718px;width:983px;height:18px"></div>
<div class="btn" style="left:3px;top:718px;width:17px;height:18px"></div>
<svg class="a" style="left:3px;top:718px" width="17" height="18"><path d="M10 5V12L6.5 8.5Z" fill="#000"/></svg>
<div class="btn" style="left:221px;top:718px;width:725px;height:18px"></div>
<div class="btn" style="left:949px;top:718px;width:17px;height:18px"></div>
<svg class="a" style="left:949px;top:718px" width="17" height="18"><path d="M7 5V12L10.5 8.5Z" fill="#000"/></svg>
<div class="btn" style="left:1003px;top:700px;width:18px;height:18px"></div><svg class="a" style="left:1003px;top:700px" width="18" height="18"><circle cx="7.5" cy="7.5" r="4.2" fill="none" stroke="#000" stroke-width="2"/><line x1="10.5" y1="10.5" x2="14" y2="14" stroke="#000" stroke-width="2.2"/><line x1="5.5" y1="7.5" x2="9.5" y2="7.5" stroke="#000" stroke-width="1.6"/><line x1="7.5" y1="5.5" x2="7.5" y2="9.5" stroke="#000" stroke-width="1.6"/></svg>
<div class="btn" style="left:966px;top:718px;width:18px;height:18px"></div><svg class="a" style="left:966px;top:718px" width="18" height="18"><circle cx="7.5" cy="7.5" r="4.2" fill="none" stroke="#000" stroke-width="2"/><line x1="10.5" y1="10.5" x2="14" y2="14" stroke="#000" stroke-width="2.2"/><line x1="5.5" y1="7.5" x2="9.5" y2="7.5" stroke="#000" stroke-width="1.6"/><line x1="7.5" y1="5.5" x2="7.5" y2="9.5" stroke="#000" stroke-width="1.6"/></svg>
<div class="btn" style="left:984px;top:718px;width:18px;height:18px"></div><svg class="a" style="left:984px;top:718px" width="18" height="18"><circle cx="7.5" cy="7.5" r="4.2" fill="none" stroke="#000" stroke-width="2"/><line x1="10.5" y1="10.5" x2="14" y2="14" stroke="#000" stroke-width="2.2"/><line x1="5.5" y1="7.5" x2="9.5" y2="7.5" stroke="#000" stroke-width="1.6"/></svg>
<div class="btn" style="left:1003px;top:718px;width:18px;height:18px"></div><svg class="a" style="left:1003px;top:718px" width="18" height="18"><circle cx="7.5" cy="7.5" r="4.2" fill="none" stroke="#000" stroke-width="2"/><line x1="10.5" y1="10.5" x2="14" y2="14" stroke="#000" stroke-width="2.2"/><line x1="5.5" y1="7.5" x2="9.5" y2="7.5" stroke="#000" stroke-width="1.6"/></svg>
<div class="a" style="left:1021px;top:25px;width:3px;height:711px;background:#F4F3EF"></div>
<div class="a" style="left:0;top:25px;width:2px;height:711px;background:#F4F3EF"></div>
<div class="a" style="left:0;top:736px;width:1024px;height:2px;background:#F8F6EE"></div>
<div class="a" style="left:0;top:738px;width:1024px;height:30px;background:linear-gradient(#BDB186 0px,#BEB087 6px,#C2AF8B 9px,#BCAD87 14px,#B8A884 30px)"></div>
<div class="a" style="left:0;top:738px;width:1024px;height:1px;background:#A89E7E"></div>
<div class="a" style="left:0;top:739px;width:1024px;height:3px;background:#C4B891"></div>
<div class="a" style="left:3px;top:742px;width:222px;height:1px;background:#9C8A62"></div>
<div class="a" style="left:3px;top:742px;width:1px;height:21px;background:#9C8A62"></div>
<div class="a" style="left:6.5px;top:744px;font-size:12px;color:#4A3E28;line-height:14px;letter-spacing:0px;white-space:pre;transform:scaleX(0.84);transform-origin:0 0">Cursor:</div>
<div class="a" style="left:45.5px;top:744px;font-size:12px;color:#4A3E28;line-height:14px;letter-spacing:0px;white-space:pre;transform:scaleX(0.84);transform-origin:0 0">37</div>
<div class="a" style="left:70px;top:744px;font-size:12px;color:#4A3E28;line-height:14px;letter-spacing:0px;white-space:pre;transform:scaleX(0.84);transform-origin:0 0">Hz,</div>
<div class="a" style="left:88.5px;top:744px;font-size:12px;color:#4A3E28;line-height:14px;letter-spacing:0px;white-space:pre;transform:scaleX(0.84);transform-origin:0 0">left</div>
<div class="a" style="left:112px;top:744px;font-size:12px;color:#4A3E28;line-height:14px;letter-spacing:0px;white-space:pre;transform:scaleX(0.84);transform-origin:0 0">-118.48</div>
<div class="a" style="left:152px;top:744px;font-size:12px;color:#4A3E28;line-height:14px;letter-spacing:0px;white-space:pre;transform:scaleX(0.84);transform-origin:0 0">dB,</div>
<div class="a" style="left:175.5px;top:744px;font-size:12px;color:#4A3E28;line-height:14px;letter-spacing:0px;white-space:pre;transform:scaleX(0.84);transform-origin:0 0">right</div>
<div class="a" style="left:207.5px;top:744px;font-size:12px;color:#4A3E28;line-height:14px;letter-spacing:0px;white-space:pre;transform:scaleX(0.84);transform-origin:0 0">-118.75</div>
<div class="a" style="left:248px;top:744px;font-size:12px;color:#4A3E28;line-height:14px;letter-spacing:0px;white-space:pre;transform:scaleX(0.84);transform-origin:0 0">dB</div>
<div class="a" style="left:226px;top:738px;width:43px;height:29px;background:rgba(230,222,200,0.28);border:1px solid rgba(235,228,205,0.55)"></div>
<div class="a" style="left:271px;top:738px;width:44px;height:29px;background:rgba(230,222,200,0.28);border:1px solid rgba(235,228,205,0.55)"></div>
<div class="a" style="left:317px;top:738px;width:43px;height:29px;background:rgba(230,222,200,0.28);border:1px solid rgba(255,255,255,0.75)"></div>
<div class="a" style="left:362px;top:738px;width:8px;height:29px;background:rgba(230,222,200,0.28);border:1px solid rgba(235,228,205,0.55)"></div>
<div class="a" style="left:371px;top:738px;width:27px;height:29px;background:rgba(230,222,200,0.28);border:1px solid rgba(235,228,205,0.55)"></div>
<svg class="a" style="left:0;top:736px" width="1024" height="32"><path d="M13 11.5L19 10.6V16.3H13Z M20 10.4L26.5 9.5V16.3H20Z M13 17.3H19V23L13 22.2Z M20 17.3H26.5V24L20 23.1Z" fill="#FBFAF4"/><path d="M13 16.8H26.5 M19.5 10V23.5" stroke="#C0AF8A" stroke-width="0.9"/><circle cx="62.8" cy="17.4" r="7.6" fill="#2BA0DA"/><path d="M59.5 14h3v3h-3z M63.3 14h3v3h-3z M59.5 17.8h3v3h-3z M63.3 17.8h3v3h-3z" fill="#E6F6FF"/><path d="M102 14.5h5l1.5 -1.5h7.5v10.5h-14z" fill="#EEDC8C"/><path d="M102.5 18.5h13.5l-1 6.5h-2.5v-3.5h-7v3.5h-2.5z" fill="#5BA9DC"/><ellipse cx="157.5" cy="14.5" rx="7.5" ry="5" fill="#F6EEE8" stroke="#D06050" stroke-width="1.6"/><path d="M156 12L159 20 M160 12L156 20" stroke="#3A5A7A" stroke-width="1.3"/><circle cx="155.5" cy="22" r="1.6" fill="none" stroke="#3A7AAA" stroke-width="1.2"/><circle cx="160" cy="22" r="1.6" fill="none" stroke="#3A7AAA" stroke-width="1.2"/><rect x="196" y="9" width="10.5" height="16" rx="1.5" fill="#D83040"/><rect x="197.5" y="11.5" width="7.5" height="10" fill="#1A2030"/><path d="M239 15h3l5 -5v15l-5 -5h-3z" fill="#A8A8A8" stroke="#E8E8E8" stroke-width="0.8"/><path d="M285 14.5h3l5 -5v15l-5 -5h-3z" fill="#D85040" stroke="#903020" stroke-width="0.8"/><path d="M294 12q2 5 0 10" stroke="#704020" stroke-width="1" fill="none"/><path d="M296 26L302.5 9L309 26M298.5 20h8" stroke="#8A7A60" stroke-width="2.2" fill="none"/><path d="M333 17 q6 -8 12 -4" stroke="#A8A0B8" stroke-width="3" fill="none" opacity="0.6"/><rect x="331.5" y="9.5" width="15" height="15" fill="#000" stroke="#F0F0F0" stroke-width="1"/><path d="M335.5 10v14 M339 10v14 M342.5 10v14 M332 13.5h14 M332 17h14 M332 20.5h14" stroke="#808080" stroke-width="0.8"/><path d="M332 23l4 -1l3 -4l3 3l4 -1v4h-14z" fill="#2ED02E"/><path d="M363 24l7 -8 M366 10a4 4 0 1 0 5 5" stroke="#8A7F66" stroke-width="2" fill="none" opacity="0.7"/><rect x="375.5" y="7.5" width="20" height="19" fill="#8C7E40" stroke="#5E5428" stroke-width="1"/><rect x="379" y="8" width="12" height="7" fill="#C9BE8C"/><rect x="380" y="19" width="11" height="7" fill="#3E3818"/><rect x="387" y="20" width="2.5" height="5" fill="#C9BE8C"/><g stroke="#F4EFE2" stroke-width="1.4" fill="none" stroke-linecap="round"><path d="M692.5 12h5 M691.5 15.5h7.5 M695.5 15.5v2q0 3 -3 4.5 M698.5 10.5l1 1.5 M700.5 10l1 1.5"/><path d="M701.5 12.5h6q-1.5 5 -6.5 8.5 M704.5 17.5l3.5 4"/><path d="M711.5 11q-0.5 2 -2.5 4 M710.5 13h6q-1 5.5 -6 8.5"/><path d="M720 10.5v11.5 M720 15q2.5 0.5 4 2"/><path d="M726 15l0.8 2.5 M728.5 14.5l0.6 2.5 M731.5 14.5q-0.5 4.5 -4 7"/><path d="M733.5 12.5h6.5q-1 6 -6 9"/><circle cx="741.5" cy="11" r="1.4" stroke-width="1"/></g><path d="M751 10l3 2l-3 2 M755 10l3 2l-3 2" stroke="#F4EFE2" stroke-width="1.2" fill="none"/><path d="M770.5 20h8l-4 -4z" fill="#F4EFE2"/><path d="M791 15h3.5l5.5 -5.5v16l-5.5 -5.5h-3.5z" fill="#E06040" stroke="#802010" stroke-width="0.9"/><path d="M802 13.5q1.5 4 0 8 M804.5 11.5q2.5 6 0 12" stroke="#4A3A20" stroke-width="1" fill="none"/><rect x="822" y="9" width="7" height="8" fill="#9A9A9A" stroke="#555" stroke-width="0.8"/><rect x="823" y="17" width="5" height="7" fill="#555"/><circle cx="831.5" cy="21.5" r="4.6" fill="#2A9A3A"/><path d="M829 21.5l2 2l3.2 -3.5" stroke="#fff" stroke-width="1.4" fill="none"/><path d="M845 15h3l4.5 -5v15l-4.5 -5h-3z" fill="#F4F4F4" stroke="#888" stroke-width="0.8"/><circle cx="855.5" cy="21.5" r="4.3" fill="#fff" stroke="#D02020" stroke-width="1.6"/><path d="M852.5 18.5l6 6" stroke="#D02020" stroke-width="1.6"/><path d="M875.5 25L879.2 10.5h1.6L884.5 25M877.2 20h5.6" stroke="#5A5040" stroke-width="3.4" fill="none" stroke-linejoin="round"/><path d="M875.5 25L879.2 10.5h1.6L884.5 25M877.2 20h5.6" stroke="#FBFAF4" stroke-width="1.8" fill="none" stroke-linejoin="round"/><rect x="901.5" y="10.5" width="15" height="15" fill="#F4F4F4" stroke="#222" stroke-width="1"/><circle cx="909" cy="18" r="6" fill="#141414"/><path d="M910.5 13v5.5q0 2.5 -2.5 2.5q-1.5 0 -2.2 -1" stroke="#fff" stroke-width="1.6" fill="none"/></svg>
<div class="a" style="left:957px;top:746px;font-size:13px;color:#F6F2E4;line-height:14px;letter-spacing:0.5px;-webkit-text-stroke:0.3px #F6F2E4">1:00</div>
</body></html>
